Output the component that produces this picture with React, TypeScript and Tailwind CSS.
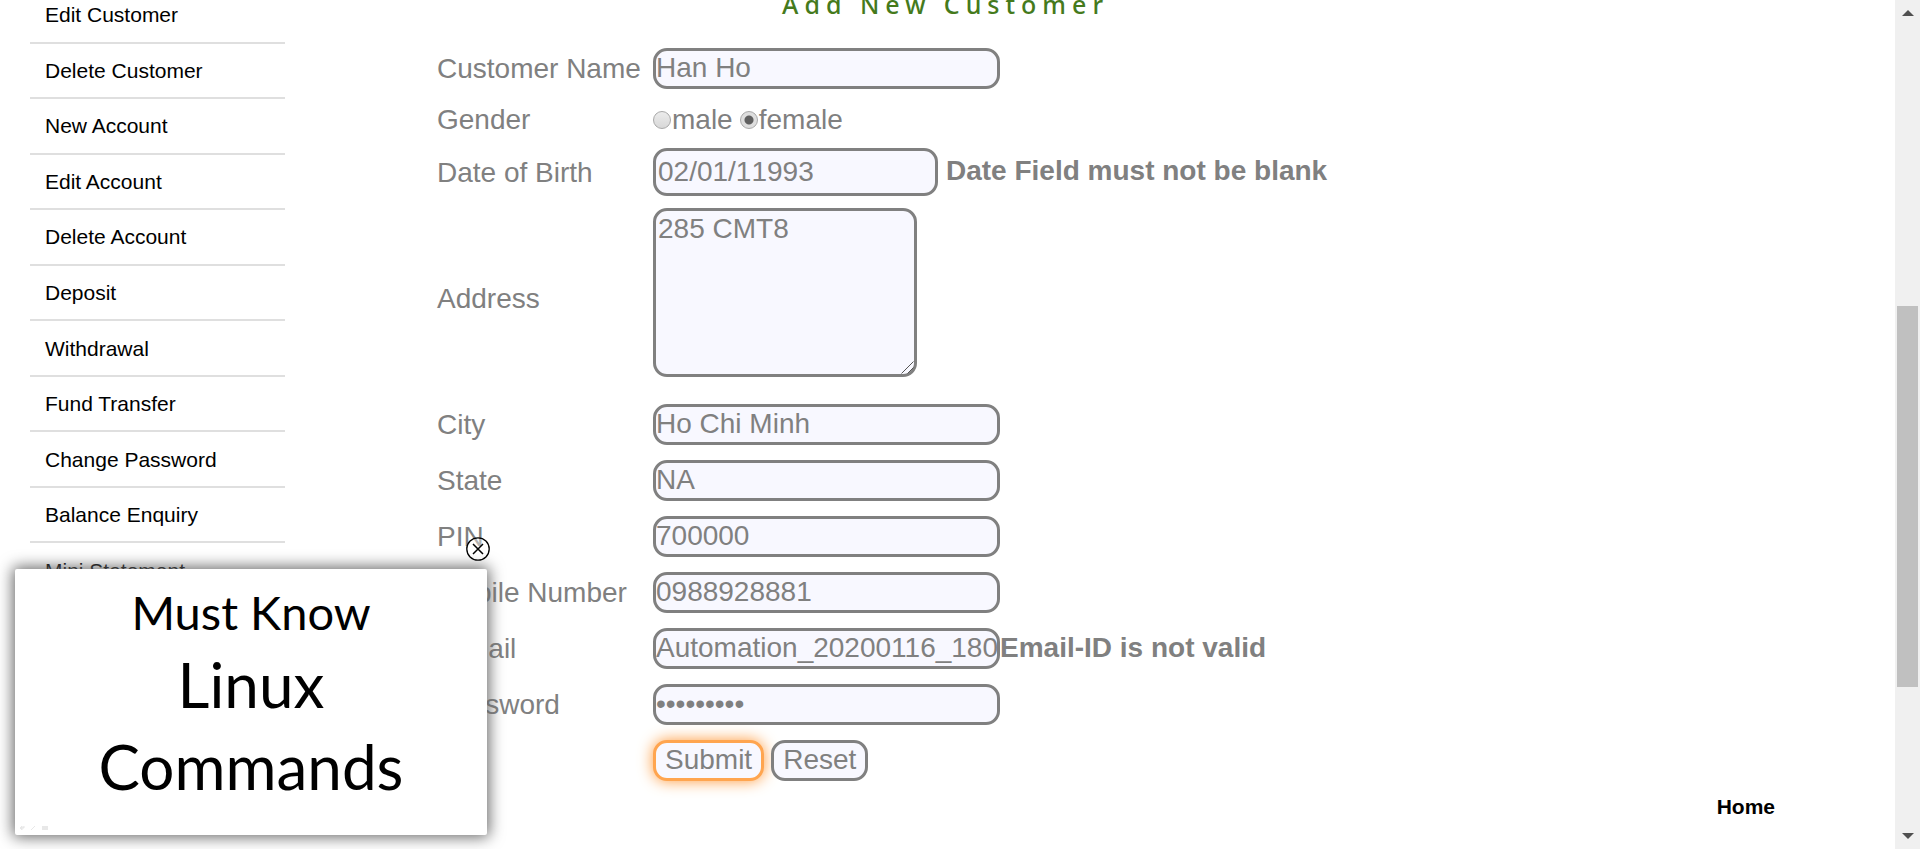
import { ReactNode } from "react";

const menuItems = [
  "Edit Customer",
  "Delete Customer",
  "New Account",
  "Edit Account",
  "Delete Account",
  "Deposit",
  "Withdrawal",
  "Fund Transfer",
  "Change Password",
  "Balance Enquiry",
  "Mini Statement",
];

const boxStyle =
  "block border-[3px] border-[#808080] rounded-[14px] bg-[#f8f8ff] text-[#808080] outline-none";

function Sidebar() {
  return (
    <nav className="w-[255px] shrink-0 ml-[30px] -mt-3">
      <ul className="grid h-[611px] auto-rows-fr text-[21px] leading-6 text-black">
        {menuItems.map((item) => (
          <li key={item} className="flex border-b-2 border-[#dfdfdf]">
            <a href="#" className="flex flex-1 items-center pt-px pl-[15px]">
              {item}
            </a>
          </li>
        ))}
      </ul>
    </nav>
  );
}

function Row({
  label,
  htmlFor,
  className = "pt-2 pb-[7px]",
  children,
}: {
  label?: string;
  htmlFor?: string;
  className?: string;
  children: ReactNode;
}) {
  return (
    <div className="grid grid-cols-[216px_1fr] items-center">
      {label ? (
        <label htmlFor={htmlFor} className="pt-0.5">
          {label}
        </label>
      ) : (
        <span />
      )}
      <div className={`flex ${className}`}>{children}</div>
    </div>
  );
}

function Field({
  label,
  id,
  value,
  type = "text",
  error,
}: {
  label: string;
  id: string;
  value: string;
  type?: string;
  error?: string;
}) {
  return (
    <Row label={label} htmlFor={id}>
      <input id={id} type={type} defaultValue={value} className={`${boxStyle} h-[41px] w-[347px] pb-px`} />
      {error && <span className="font-bold leading-10">{error}</span>}
    </Row>
  );
}

const radioStyle =
  "size-[18px] appearance-none rounded-full border border-[#a8a8a8] bg-linear-to-b from-[#ececec] to-[#d8d8d8] p-1 checked:bg-[radial-gradient(circle,#606060_0_4px,#dedede_5px)]";

function CustomerForm() {
  return (
    <form className="text-[28px] leading-8 text-[#808080]">
      <Field label="Customer Name" id="name" value="Han Ho" />
      <div role="radiogroup" aria-label="Gender" className="grid h-12 grid-cols-[216px_1fr] items-center">
        <span>Gender</span>
        <div className="flex gap-[7px]">
          <label className="flex items-center gap-px">
            <input type="radio" name="gender" className={radioStyle} />
            male
          </label>
          <label className="flex items-center gap-px">
            <input type="radio" name="gender" defaultChecked className={radioStyle} />
            female
          </label>
        </div>
      </div>
      <Row label="Date of Birth" htmlFor="dob" className="gap-2 py-1">
        <input
          id="dob"
          type="text"
          defaultValue="02/01/11993"
          className={`${boxStyle} h-12 w-[285px] px-0.5 pb-px [font-kerning:none]`}
        />
        <span className="font-bold leading-[46px]">Date Field must not be blank</span>
      </Row>
      <Row label="Address" htmlFor="address" className="pt-2 pb-[19px]">
        <div className="relative">
          <textarea
            id="address"
            defaultValue="285 CMT8"
            className={`${boxStyle} h-[169px] w-[264px] resize-none p-0.5`}
          />
          <svg
            viewBox="0 0 13 13"
            className="pointer-events-none absolute right-[3px] bottom-[3px] size-[13px]"
            stroke="#555"
            strokeWidth="1"
          >
            <path d="M0.5 12.5L12.5 0.5M6.5 12.5L12.5 6.5" />
          </svg>
        </div>
      </Row>
      <Field label="City" id="city" value="Ho Chi Minh" />
      <Field label="State" id="state" value="NA" />
      <Field label="PIN" id="pin" value="700000" />
      <Field label="Mobile Number" id="mobile" value="0988928881" />
      <Field label="E-mail" id="email" value="Automation_20200116_180" error="Email-ID is not valid" />
      <Field label="Password" id="password" type="password" value="password1" />
      <Row className="gap-[7px] pt-2 pb-[7px]">
        <button
          type="button"
          className="h-[41px] rounded-[14px] border-[3px] border-[#ffa54f] bg-[#f8f8ff] px-[9px] pb-px shadow-[0_0_15px_#ff9a3c]"
        >
          Submit
        </button>
        <button
          type="reset"
          className="h-[41px] rounded-[14px] border-[3px] border-[#808080] bg-[#f8f8ff] px-[9px] pb-px"
        >
          Reset
        </button>
      </Row>
    </form>
  );
}

function VideoPopup() {
  return (
    <aside className="absolute bottom-[14px] left-[15px] h-[266px] w-[472px] rounded-xs bg-white text-center font-[Lato,sans-serif] text-black shadow-[0_0_15px_2px_#666]">
      <p className="pt-[11px] text-[47px] leading-[64px]">Must Know</p>
      <p className="text-[62px] leading-[80px]">Linux</p>
      <p className="text-[62px] leading-[84px]">Commands</p>
      <svg viewBox="0 0 30 6" className="absolute bottom-1 left-1 h-1.5 w-[30px]" fill="#e8e8e8" stroke="#e8e8e8">
        <path d="M1 3L3 1V5ZM3 3H5V1M12 5L16 1" />
        <rect x="23.500" y="1.500" width="5" height="3" />
      </svg>
      <button type="button" aria-label="Close" className="absolute -top-8 -right-[3px] size-6">
        <svg viewBox="0 0 24 24" className="size-6" fill="none" stroke="#000">
          <circle cx="12" cy="12" r="11.2" fill="#fff" fillOpacity="0.4" strokeWidth="1.3" />
          <path d="M7 7l10 10M17 7L7 17" strokeWidth="1.5" />
        </svg>
      </button>
    </aside>
  );
}

function ScrollTrack() {
  return (
    <div className="flex w-[25px] shrink-0 flex-col items-center bg-[#f0f0f0] py-[10px]">
      <svg viewBox="0 0 12 6" className="h-1.5 w-3" fill="#505050">
        <path d="M0 6L6 0L12 6Z" />
      </svg>
      <div className="grid w-[21px] flex-1 grid-rows-[290fr_381fr_146fr]">
        <div className="row-start-2 bg-[#c0c0c0]" />
      </div>
      <svg viewBox="0 0 12 6" className="h-1.5 w-3" fill="#505050">
        <path d="M0 0L6 6L12 0Z" />
      </svg>
    </div>
  );
}

export default function App() {
  return (
    <div className="relative flex h-screen overflow-hidden bg-white font-['Liberation_Sans',Arial,sans-serif]">
      <Sidebar />
      <main className="ml-[152px] flex-1 pr-[120px]">
        <h1 className="-mt-3 mb-5 mr-[-120px] pl-[345px] font-['Noto_Sans','Open_Sans',sans-serif] text-[25px] leading-8 font-medium tracking-[6px] text-[#457a1c]">
          Add New Customer
        </h1>
        <CustomerForm />
        <footer className="pt-[7px] text-right">
          <a href="#" className="text-[21px] leading-6 font-bold text-black">
            Home
          </a>
        </footer>
      </main>
      <ScrollTrack />
      <VideoPopup />
    </div>
  );
}
